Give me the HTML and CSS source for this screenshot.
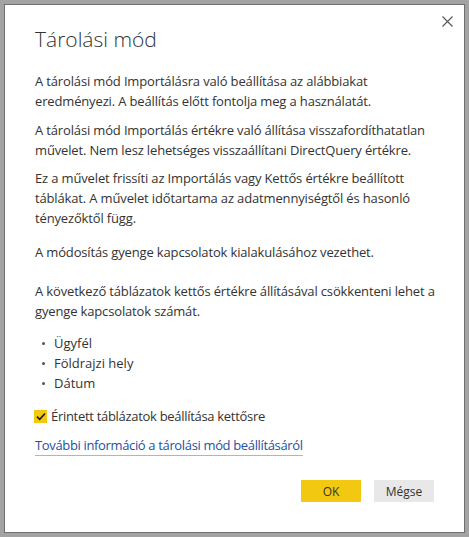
FILE: index.html
```html
<!DOCTYPE html>
<html lang="hu">
<head>
<meta charset="utf-8">
<link rel="stylesheet" href="styles.css">
</head>
<body>
<div class="dialog">
  <button class="close" aria-label="Bezárás">
    <svg width="11" height="11" viewBox="0 0 11 11"><path d="M0.5 0.5 L10.5 10.5 M10.5 0.5 L0.5 10.5" stroke="#555" stroke-width="1.1" fill="none"/></svg>
  </button>
  <h1 class="title">Tárolási mód</h1>
  <p class="p p1">A tárolási mód Importálásra való beállítása az alábbiakat<br>eredményezi. A beállítás előtt fontolja meg a használatát.</p>
  <p class="p p2">A tárolási mód Importálás értékre való állítása visszafordíthatatlan<br>művelet. Nem lesz lehetséges visszaállítani DirectQuery értékre.</p>
  <p class="p p3">Ez a művelet frissíti az Importálás vagy Kettős értékre beállított<br>táblákat. A művelet időtartama az adatmennyiségtől és hasonló<br>tényezőktől függ.</p>
  <p class="p p4">A módosítás gyenge kapcsolatok kialakulásához vezethet.</p>
  <p class="p p5">A következő táblázatok kettős értékre állításával csökkenteni lehet a<br>gyenge kapcsolatok számát.</p>
  <ul class="list">
    <li>Ügyfél</li>
    <li>Földrajzi hely</li>
    <li>Dátum</li>
  </ul>
  <label class="check">
    <span class="box"><svg width="10" height="9" viewBox="0 0 10 9"><path d="M1 4.6 L3.7 7.3 L9 1.5" stroke="#1a1a1a" stroke-width="1.6" fill="none"/></svg></span>
    <span class="check-label">Érintett táblázatok beállítása kettősre</span>
  </label>
  <a class="link" href="#">További információ a tárolási mód beállításáról</a>
  <div class="buttons">
    <button class="btn ok">OK</button>
    <button class="btn cancel">Mégse</button>
  </div>
</div>
</body>
</html>
```

FILE: styles.css
```css
html, body { margin: 0; padding: 0; }
body {
  background: #a3a3a3;
  padding: 4px;
  font-family: "Open Sans", "Noto Sans", sans-serif;
  color: #333333;
}
.dialog {
  position: relative;
  box-sizing: border-box;
  width: 461px;
  height: 529px;
  background: #ffffff;
  border: 1px solid #6f6f6f;
  padding: 0 20px 0 30px;
}
.close {
  position: absolute;
  top: 11px;
  right: 11px;
  border: 0;
  background: none;
  padding: 0;
  width: 11px;
  height: 11px;
  display: block;
}
.close svg { display: block; }
.title {
  margin: 0;
  padding-top: 19px;
  font-size: 21px;
  line-height: 30px;
  font-weight: 300;
  color: #333;
}
.p {
  margin: 0;
  font-size: 13px;
  line-height: 20px;
  white-space: nowrap;
  letter-spacing: -0.15px;
}
.p1 { margin-top: 17px; }
.p2 { margin-top: 9px; }
.p3 { margin-top: 8px; }
.p4 { margin-top: 14px; }
.p5 { margin-top: 19px; }
.list {
  margin: 12px 0 0;
  padding: 0 0 0 7px;
  list-style: none;
  font-size: 13px;
  line-height: 20px;
}
.list li { position: relative; padding-left: 12px; }
.list li::before {
  content: "";
  position: absolute;
  left: 0;
  top: 9px;
  width: 3px;
  height: 3px;
  border-radius: 50%;
  background: #4a5366;
}
.check {
  margin-top: 13px;
  display: flex;
  align-items: center;
  gap: 4px;
  font-size: 13px;
  line-height: 20px;
  margin-left: -1px;
}
.check-label { letter-spacing: -0.3px; }
.box {
  width: 13px;
  height: 13px;
  background: #f2c811;
  display: flex;
  align-items: center;
  justify-content: center;
}
.box svg { display: block; }
.link {
  display: inline-block;
  margin-top: 10px;
  font-size: 13px;
  line-height: 19px;
  color: #254fa3;
  text-decoration: none;
  border-bottom: 1px solid #a7b5d4;
  letter-spacing: -0.35px;
}
.buttons {
  display: flex;
  justify-content: flex-end;
  gap: 13px;
  margin-top: 24px;
  margin-right: 10px;
}
.btn {
  width: 60px;
  height: 22px;
  border: 0;
  padding: 0;
  font-family: inherit;
  font-size: 12px;
  color: #333;
}
.ok { background: #f2c811; }
.cancel { background: #e8e8e8; }
```
